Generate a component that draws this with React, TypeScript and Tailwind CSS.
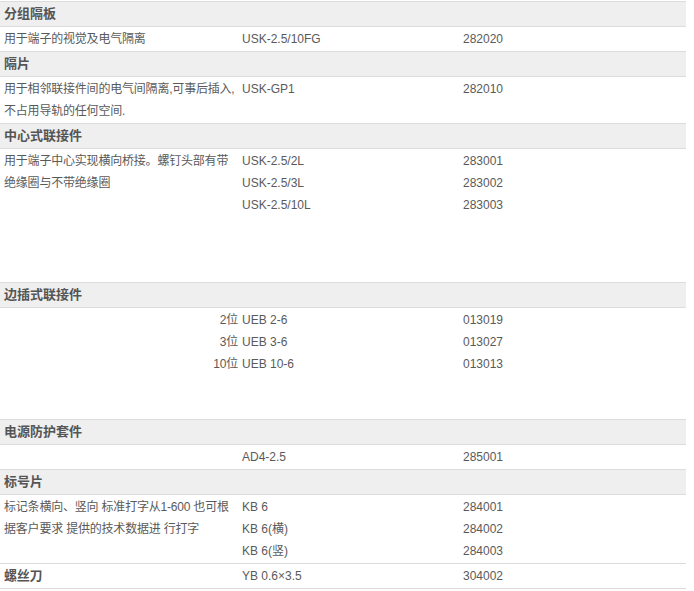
import React from "react";

const font = { fontFamily: '"Liberation Sans", Arial, "Noto Sans CJK SC", sans-serif' };

function Header({ title }: { title: string }) {
  return (
    <div className="h-[25px] bg-[#efefef] border-b border-[#dcdcdc] pl-[4px] leading-[24px] font-bold text-[13px] text-[#555]">
      {title}
    </div>
  );
}

function Row({
  desc,
  codes,
  nums,
  h,
  bold,
  descRight,
}: {
  desc: React.ReactNode;
  codes: string[];
  nums: string[];
  h?: string;
  bold?: boolean;
  descRight?: string[];
}) {
  return (
    <div className={`grid grid-cols-[240px_221px_1fr] border-b border-[#dcdcdc] py-px leading-[22px] text-[12px] text-[#5a5a5a] ${h ?? ""}`}>
      <div className={`pl-[4px] pr-[2px] whitespace-nowrap tracking-[-0.2px] ${bold ? "font-bold text-[13px] text-[#555]" : ""}`}>
        {descRight ? (
          <div className="flex flex-col items-end">
            {descRight.map((d) => (
              <div key={d}>{d}</div>
            ))}
          </div>
        ) : (
          desc
        )}
      </div>
      <div className="pl-[2px] whitespace-nowrap">
        {codes.map((c) => (
          <div key={c}>{c}</div>
        ))}
      </div>
      <div className="pl-[2px]">
        {nums.map((n) => (
          <div key={n}>{n}</div>
        ))}
      </div>
    </div>
  );
}

export default function App() {
  return (
    <div className="w-[694px] h-[591px] bg-white overflow-hidden" style={font}>
      <div className="w-[686px] mt-px border-t border-[#dcdcdc]">
        <Header title="分组隔板" />
        <Row desc="用于端子的视觉及电气隔离" codes={["USK-2.5/10FG"]} nums={["282020"]} />
        <Header title="隔片" />
        <Row
          desc={
            <>
              用于相邻联接件间的电气间隔离,可事后插入,
              <br />
              不占用导轨的任何空间.
            </>
          }
          codes={["USK-GP1"]}
          nums={["282010"]}
        />
        <Header title="中心式联接件" />
        <Row
          desc={
            <>
              用于端子中心实现横向桥接。螺钉头部有带
              <br />
              绝缘圈与不带绝缘圈
            </>
          }
          codes={["USK-2.5/2L", "USK-2.5/3L", "USK-2.5/10L"]}
          nums={["283001", "283002", "283003"]}
          h="h-[134px]"
        />
        <Header title="边插式联接件" />
        <Row
          desc=""
          descRight={["2位", "3位", "10位"]}
          codes={["UEB 2-6", "UEB 3-6", "UEB 10-6"]}
          nums={["013019", "013027", "013013"]}
          h="h-[112px]"
        />
        <Header title="电源防护套件" />
        <Row desc="" codes={["AD4-2.5"]} nums={["285001"]} />
        <Header title="标号片" />
        <Row
          desc={
            <>
              标记条横向、竖向 标准打字从1-600 也可根
              <br />
              据客户要求 提供的技术数据进 行打字
            </>
          }
          codes={["KB 6", "KB 6(横)", "KB 6(竖)"]}
          nums={["284001", "284002", "284003"]}
        />
        <Row desc="螺丝刀" bold codes={["YB 0.6×3.5"]} nums={["304002"]} />
      </div>
    </div>
  );
}
